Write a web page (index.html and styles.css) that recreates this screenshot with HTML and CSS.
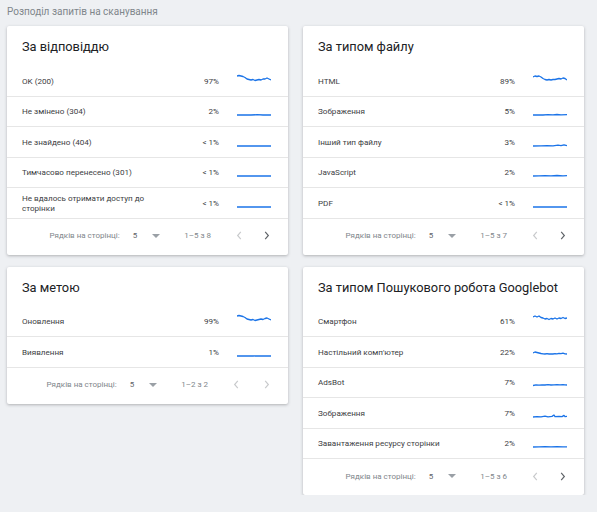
FILE: index.html
```html
<!DOCTYPE html>
<html>
    <head>
        <title>Розподіл запитів на сканування</title>
        <link rel="stylesheet" href="styles.css">
    </head>
    <body>
        <h1 class="pageHead">Розподіл запитів на сканування</h1>

        <div class="grid">
            <!-- За відповіддю -->
            <div class="card">
                <h2 class="cardTitle">За відповіддю</h2>
                <div class="row">
                    <span class="label">OK (200)</span>
                    <span class="pct">97%</span>
                    <svg class="spark" viewBox="0 0 34 16"><polyline points="0,3 2,2.5 4,3 6,3.5 8,4.5 10,6 12,6.5 14,7 16,6.5 18,7.5 20,7 22,6.5 24,7 26,6 28,6 30,5 32,6 34,7"/></svg>
                </div>
                <div class="row">
                    <span class="label">Не змінено (304)</span>
                    <span class="pct">2%</span>
                    <svg class="spark" viewBox="0 0 34 16"><polyline points="0,12 6,12 10,11.8 14,12 20,11.7 26,12 30,11.8 34,12"/></svg>
                </div>
                <div class="row">
                    <span class="label">Не знайдено (404)</span>
                    <span class="pct">&lt; 1%</span>
                    <svg class="spark" viewBox="0 0 34 16"><polyline points="0,12 34,12"/></svg>
                </div>
                <div class="row">
                    <span class="label">Тимчасово перенесено (301)</span>
                    <span class="pct">&lt; 1%</span>
                    <svg class="spark" viewBox="0 0 34 16"><polyline points="0,12 34,12"/></svg>
                </div>
                <div class="row">
                    <span class="label">Не вдалось отримати доступ до сторінки</span>
                    <span class="pct">&lt; 1%</span>
                    <svg class="spark" viewBox="0 0 34 16"><polyline points="0,12 34,12"/></svg>
                </div>
                <div class="pager">
                    <span class="pagerLabel">Рядків на сторінці:</span>
                    <span class="pagerSize">5</span>
                    <span class="caret"></span>
                    <span class="pagerRange">1–5 з 8</span>
                    <svg class="chev off" viewBox="0 0 6 10"><path d="M5 1 L1.5 5 L5 9"/></svg>
                    <svg class="chev" viewBox="0 0 6 10"><path d="M1 1 L4.5 5 L1 9"/></svg>
                </div>
            </div>

            <!-- За типом файлу -->
            <div class="card">
                <h2 class="cardTitle">За типом файлу</h2>
                <div class="row">
                    <span class="label">HTML</span>
                    <span class="pct">89%</span>
                    <svg class="spark" viewBox="0 0 34 16"><polyline points="0,4 2,3 4,3.5 6,3 8,4 10,5.5 12,6.5 14,7 16,6.5 18,7 20,6.5 22,6.5 24,6 26,5.5 28,6 30,5 32,5.5 34,7"/></svg>
                </div>
                <div class="row">
                    <span class="label">Зображення</span>
                    <span class="pct">5%</span>
                    <svg class="spark" viewBox="0 0 34 16"><polyline points="0,12 5,11.8 10,12 15,11.6 20,11.9 24,11.5 28,11.8 34,11.6"/></svg>
                </div>
                <div class="row">
                    <span class="label">Інший тип файлу</span>
                    <span class="pct">3%</span>
                    <svg class="spark" viewBox="0 0 34 16"><polyline points="0,12 8,11.8 14,11.6 20,11.8 25,11.2 28,11.6 31,10.8 34,11.6"/></svg>
                </div>
                <div class="row">
                    <span class="label">JavaScript</span>
                    <span class="pct">2%</span>
                    <svg class="spark" viewBox="0 0 34 16"><polyline points="0,12 6,11.8 12,11.6 18,11.8 24,11.5 30,11.8 34,11.6"/></svg>
                </div>
                <div class="row">
                    <span class="label">PDF</span>
                    <span class="pct">&lt; 1%</span>
                    <svg class="spark" viewBox="0 0 34 16"><polyline points="0,12 34,12"/></svg>
                </div>
                <div class="pager">
                    <span class="pagerLabel">Рядків на сторінці:</span>
                    <span class="pagerSize">5</span>
                    <span class="caret"></span>
                    <span class="pagerRange">1–5 з 7</span>
                    <svg class="chev off" viewBox="0 0 6 10"><path d="M5 1 L1.5 5 L5 9"/></svg>
                    <svg class="chev" viewBox="0 0 6 10"><path d="M1 1 L4.5 5 L1 9"/></svg>
                </div>
            </div>

            <!-- За метою -->
            <div class="card">
                <h2 class="cardTitle">За метою</h2>
                <div class="row">
                    <span class="label">Оновлення</span>
                    <span class="pct">99%</span>
                    <svg class="spark" viewBox="0 0 34 16"><polyline points="0,3 2,2.5 4,3 6,3.5 8,4.5 10,6 12,6.5 14,7 16,6.5 18,7.5 20,7 22,6.5 24,6 26,6.5 28,5.5 30,5 32,6 34,7"/></svg>
                </div>
                <div class="row">
                    <span class="label">Виявлення</span>
                    <span class="pct">1%</span>
                    <svg class="spark" viewBox="0 0 34 16"><polyline points="0,12 8,11.8 16,12 24,11.8 34,12"/></svg>
                </div>
                <div class="pager">
                    <span class="pagerLabel">Рядків на сторінці:</span>
                    <span class="pagerSize">5</span>
                    <span class="caret"></span>
                    <span class="pagerRange">1–2 з 2</span>
                    <svg class="chev off" viewBox="0 0 6 10"><path d="M5 1 L1.5 5 L5 9"/></svg>
                    <svg class="chev off" viewBox="0 0 6 10"><path d="M1 1 L4.5 5 L1 9"/></svg>
                </div>
            </div>

            <!-- За типом Googlebot -->
            <div class="card">
                <h2 class="cardTitle">За типом Пошукового робота Googlebot</h2>
                <div class="row">
                    <span class="label">Смартфон</span>
                    <span class="pct">61%</span>
                    <svg class="spark" viewBox="0 0 34 16"><polyline points="0,4 2,3 4,4 6,3 8,4.5 10,5 12,6 14,5.5 16,6.5 18,5.5 20,6 22,5 24,6 26,5 28,5.5 30,4.5 32,5.5 34,5"/></svg>
                </div>
                <div class="row">
                    <span class="label">Настільний комп'ютер</span>
                    <span class="pct">22%</span>
                    <svg class="spark" viewBox="0 0 34 16"><polyline points="0,9 2,8 4,8.5 6,9 8,9.5 10,9.8 12,10 14,9.6 16,10 18,9.8 20,10 22,9.6 24,9.8 26,9.4 28,9.6 30,9.2 32,9.8 34,10"/></svg>
                </div>
                <div class="row">
                    <span class="label">AdsBot</span>
                    <span class="pct">7%</span>
                    <svg class="spark" viewBox="0 0 34 16"><polyline points="0,11.5 3,10.8 6,11.2 9,10.8 12,11 15,10.7 18,11 21,10.8 24,10.6 27,10.9 30,10.6 32,10.9 34,11"/></svg>
                </div>
                <div class="row">
                    <span class="label">Зображення</span>
                    <span class="pct">7%</span>
                    <svg class="spark" viewBox="0 0 34 16"><polyline points="0,12 4,11.6 8,11.8 12,11.2 15,11.8 19,11.4 21,10 22,11.6 26,11.4 29,11.6 31,10.4 32,11.6 34,11.4"/></svg>
                </div>
                <div class="row">
                    <span class="label">Завантаження ресурсу сторінки</span>
                    <span class="pct">2%</span>
                    <svg class="spark" viewBox="0 0 34 16"><polyline points="0,12 6,11.8 12,11.6 18,11.8 24,11.6 30,11.8 34,11.8"/></svg>
                </div>
                <div class="pager">
                    <span class="pagerLabel">Рядків на сторінці:</span>
                    <span class="pagerSize">5</span>
                    <span class="caret"></span>
                    <span class="pagerRange">1–5 з 6</span>
                    <svg class="chev off" viewBox="0 0 6 10"><path d="M5 1 L1.5 5 L5 9"/></svg>
                    <svg class="chev" viewBox="0 0 6 10"><path d="M1 1 L4.5 5 L1 9"/></svg>
                </div>
            </div>
        </div>
    </body>
</html>
```

FILE: styles.css
```css
* {
    box-sizing: border-box;
    margin: 0;
    padding: 0;
}

body {
    background: #eef0f3;
    font-family: Roboto, 'Noto Sans', sans-serif;
    color: #202124;
    padding: 6px 7px 0 7px;
}

.pageHead {
    font-size: 10px;
    font-weight: normal;
    color: #80868b;
    line-height: 12px;
    margin-bottom: 8px;
}

.grid {
    display: grid;
    grid-template-columns: 281px 281px;
    column-gap: 15px;
    row-gap: 12px;
    align-items: start;
}

.card {
    background: #ffffff;
    border-radius: 2px;
    box-shadow: 0 1px 3px rgba(60, 64, 67, 0.35);
}

.cardTitle {
    font-size: 12.8px;
    font-weight: normal;
    line-height: 17px;
    color: #202124;
    padding: 12px 15px 11px 15px;
    white-space: nowrap;
}

.row {
    display: flex;
    align-items: center;
    height: 30.5px;
    padding: 0 17px 0 15px;
    border-bottom: 1px solid #e6e6e6;
    font-size: 8.1px;
    color: #3c4043;
}

.label {
    flex: 1;
    line-height: 10px;
    padding-right: 16px;
}

.pct {
    width: 50px;
    text-align: right;
}

.spark {
    width: 34px;
    height: 16px;
    margin-left: 18px;
    flex-shrink: 0;
}

.spark polyline {
    fill: none;
    stroke: #1a73e8;
    stroke-width: 1.3;
    stroke-linejoin: round;
}

.pager {
    display: flex;
    align-items: center;
    justify-content: flex-end;
    height: 36px;
    padding: 0 18px 2px 0;
    font-size: 8px;
    color: #80868b;
    white-space: nowrap;
}

.pagerSize {
    color: #5f6368;
    margin-left: 13px;
}

.caret {
    width: 0;
    height: 0;
    border-left: 4px solid transparent;
    border-right: 4px solid transparent;
    border-top: 4px solid #9aa0a6;
    margin-left: 15px;
}

.pagerRange {
    margin-left: 24px;
}

.chev {
    width: 6px;
    height: 9px;
    margin-left: 22px;
}

.chev path {
    fill: none;
    stroke: #5f6368;
    stroke-width: 1.3;
}

.chev.off {
    margin-left: 25px;
}

.chev.off path {
    stroke: #c8cacc;
}
```
